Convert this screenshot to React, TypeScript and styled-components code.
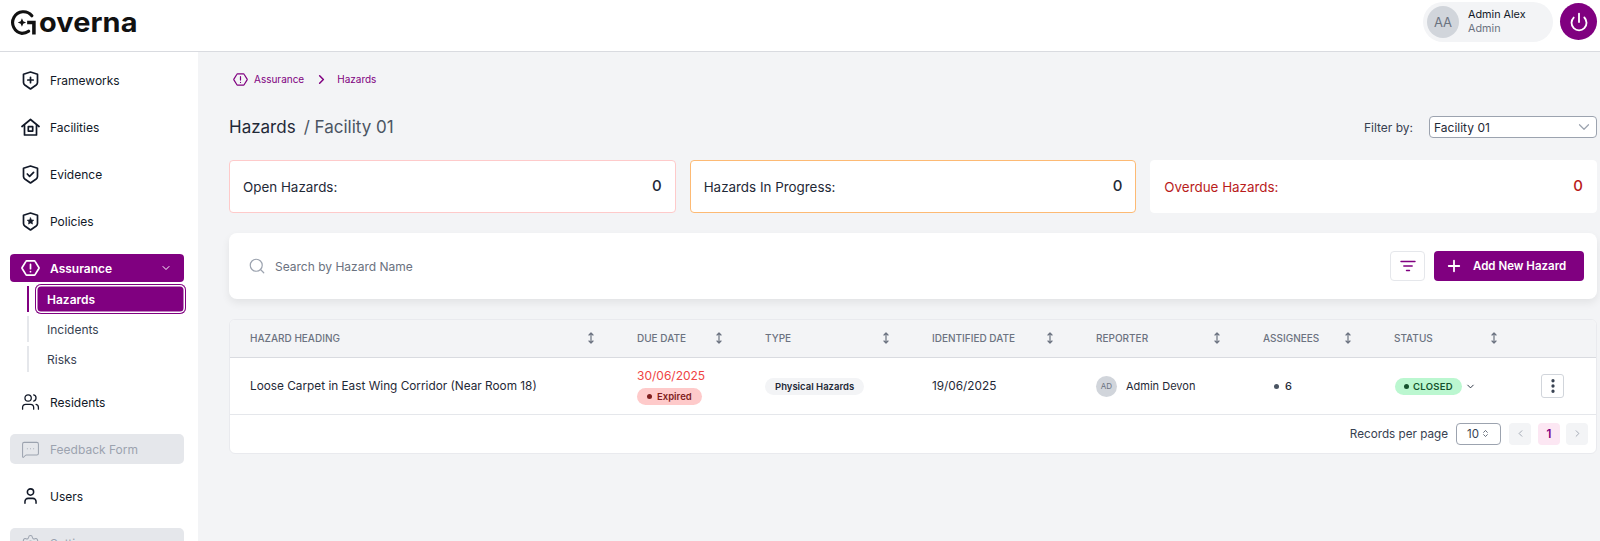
import React from 'react';
import styled, { createGlobalStyle } from 'styled-components';
import {
    ChevronDown,
    ChevronLeft,
    ChevronRight,
    ChevronsUpDown,
    EllipsisVertical,
    MessageSquareMore,
    Plus,
    Power,
    Search,
    Settings,
    User,
    Users,
} from 'lucide-react';

const PURPLE = '#800080';

const GlobalStyle = createGlobalStyle`
    html, body {
        margin: 0;
        padding: 0;
        height: 100%;
        overflow: hidden;
        background: #f3f4f6;
        font-family: Inter, "Liberation Sans", sans-serif;
        color: #111827;
    }
    * {
        box-sizing: border-box;
    }
`;

const Page = styled.div`
    display: flex;
    flex-direction: column;
    height: 541px;
    overflow: hidden;
`;

// 상단 헤더
const Header = styled.header`
    flex: none;
    display: flex;
    justify-content: space-between;
    align-items: flex-start;
    height: 52px;
    padding: 2px 3px 0 9px;
    background: #fff;
    border-bottom: 1px solid #d9dbe0;
`;
const Logo = styled.div`
    display: flex;
    align-items: center;
    height: 25px;
    margin-top: 8px;
`;
const LogoText = styled.span`
    margin-left: 1px;
    font-size: 27px;
    line-height: 24px;
    font-weight: 700;
    letter-spacing: 0.1px;
    color: #111;
    transform: scaleX(1.07);
    transform-origin: left center;
`;
const HeaderRight = styled.div`
    display: flex;
    align-items: flex-start;
    gap: 7px;
`;
const UserPill = styled.div`
    display: flex;
    align-items: center;
    gap: 9px;
    width: 130px;
    height: 40px;
    padding-left: 4px;
    border-radius: 20px;
    background: #f3f4f6;
`;
const Avatar = styled.div<{ $size: number; $font: number }>`
    flex: none;
    display: flex;
    align-items: center;
    justify-content: center;
    width: ${({ $size }) => $size}px;
    height: ${({ $size }) => $size}px;
    border-radius: 50%;
    background: #d1d5db;
    color: #6b7280;
    font-size: ${({ $font }) => $font}px;
`;
const UserText = styled.div`
    display: flex;
    flex-direction: column;
    gap: 2px;
    font-size: 10.8px;
    line-height: 12px;
`;
const UserName = styled.span`
    color: #111827;
    font-weight: 400;
`;
const UserRole = styled.span`
    color: #6b7280;
`;
const PowerButton = styled.button`
    display: flex;
    align-items: center;
    justify-content: center;
    width: 37px;
    height: 37px;
    margin-top: 1px;
    padding: 0;
    border: none;
    border-radius: 50%;
    background: ${PURPLE};
    color: #fff;
`;

const Body = styled.div`
    flex: 1;
    display: flex;
    min-height: 0;
`;

// 사이드바
const Sidebar = styled.nav`
    flex: none;
    width: 198px;
    padding: 13px 14px 0 10px;
    background: #fff;
`;
const NavItem = styled.div<{ $disabled?: boolean }>`
    display: flex;
    align-items: center;
    gap: 10px;
    height: 30px;
    margin-bottom: 17px;
    padding-left: 11px;
    border-radius: 5px;
    font-size: 12px;
    font-weight: 400;
    color: ${({ $disabled }) => ($disabled ? '#9ca3af' : '#111827')};
    background: ${({ $disabled }) => ($disabled ? '#e5e7eb' : 'transparent')};
`;
const NavIcon = styled.span`
    flex: none;
    display: flex;
    align-items: center;
    justify-content: center;
    width: 19px;
    height: 19px;
`;
const ActiveHead = styled.div`
    display: flex;
    align-items: center;
    gap: 10px;
    height: 28px;
    margin-top: 18px;
    padding: 0 12px 0 11px;
    border-radius: 4px;
    background: ${PURPLE};
    color: #fff;
    font-size: 12px;
    font-weight: 600;
`;
const HeadLabel = styled.span`
    flex: 1;
`;
const SubList = styled.div`
    display: flex;
    flex-direction: column;
    margin: 2px 0 13px;
`;
const SubRow = styled.div`
    display: flex;
    align-items: center;
    height: 30px;
    padding-left: 17px;
`;
const SubLine = styled.span<{ $active?: boolean }>`
    flex: none;
    width: 2px;
    height: 26px;
    margin-right: 6px;
    background: ${({ $active }) => ($active ? PURPLE : '#e5e7eb')};
`;
const SubLabel = styled.span<{ $active?: boolean }>`
    flex: 1;
    display: flex;
    align-items: center;
    height: 30px;
    margin-right: ${({ $active }) => ($active ? '-2px' : '0')};
    padding-left: 12px;
    border-radius: 6px;
    font-size: 12px;
    font-weight: ${({ $active }) => ($active ? 600 : 400)};
    color: ${({ $active }) => ($active ? '#fff' : '#374151')};
    background: ${({ $active }) => ($active ? PURPLE : 'transparent')};
    box-shadow: ${({ $active }) => ($active ? `inset 0 0 0 1px ${PURPLE}, inset 0 0 0 2.5px #fff` : 'none')};
`;

// 본문
const Main = styled.main`
    flex: 1;
    min-width: 0;
    padding: 17px 3px 0 31px;
`;
const Breadcrumb = styled.div`
    display: flex;
    align-items: center;
    height: 20px;
    padding-left: 4px;
    font-size: 10px;
    color: ${PURPLE};
`;
const CrumbText = styled.span`
    margin-left: 6px;
`;
const CrumbChevron = styled.span`
    display: flex;
    margin: 0 8px 0 10px;
`;
const TitleRow = styled.div`
    display: flex;
    align-items: center;
    justify-content: space-between;
    height: 22px;
    margin-top: 27px;
`;
const Title = styled.h1`
    margin: 0;
    font-size: 17px;
    font-weight: 400;
    color: #1f2937;
`;
const TitleSub = styled.span`
    margin-left: 8px;
    color: #4b5563;
`;
const FilterGroup = styled.div`
    display: flex;
    align-items: center;
    gap: 16px;
    font-size: 12px;
    color: #374151;
`;
const FilterSelect = styled.div`
    display: flex;
    align-items: center;
    justify-content: space-between;
    width: 168px;
    height: 22px;
    padding: 0 3px 0 4px;
    border: 1px solid #9ca3af;
    border-radius: 4px;
    background: #fff;
    font-size: 12px;
    color: #1f2937;
`;
const StatGrid = styled.div`
    display: grid;
    grid-template-columns: repeat(3, 1fr);
    gap: 14px;
    margin-top: 22px;
`;
const StatCard = styled.div<{ $border: string; $alert?: boolean }>`
    display: flex;
    align-items: center;
    justify-content: space-between;
    height: 53px;
    padding: 0 13px;
    border: 1px solid ${({ $border }) => $border};
    border-radius: 4px;
    background: #fff;
    font-size: 13.4px;
    color: ${({ $alert }) => ($alert ? '#b91c1c' : '#1f2937')};
`;
const StatValue = styled.span`
    margin-top: -2px;
    font-size: 15px;
    font-weight: 500;
`;
const SearchCard = styled.div`
    display: flex;
    align-items: center;
    height: 66px;
    margin-top: 20px;
    padding: 0 13px 0 19px;
    border-radius: 8px;
    background: #fff;
    box-shadow: 0 4px 8px rgba(0, 0, 0, 0.07);
`;
const SearchText = styled.span`
    flex: 1;
    margin-left: 9px;
    font-size: 12px;
    color: #6b7280;
`;
const FilterButton = styled.button`
    display: flex;
    align-items: center;
    justify-content: center;
    width: 35px;
    height: 30px;
    margin-right: 9px;
    padding: 0;
    border: 1px solid #e5e7eb;
    border-radius: 4px;
    background: #fff;
`;
const AddButton = styled.button`
    display: flex;
    align-items: center;
    gap: 10px;
    width: 150px;
    height: 30px;
    padding: 0 0 0 11px;
    border: none;
    border-radius: 4px;
    background: ${PURPLE};
    color: #fff;
    font-family: inherit;
    font-size: 11.5px;
    font-weight: 600;
`;

// 테이블
const Table = styled.div`
    height: 135px;
    margin-top: 20px;
    border: 1px solid #e9eaee;
    border-radius: 6px;
    overflow: hidden;
    background: #fff;
`;
const columns = '387px 128px 167px 164px 167px 131px 146px 1fr';
const TableHead = styled.div`
    display: grid;
    grid-template-columns: ${columns};
    height: 38px;
    background: #f3f4f6;
    border-bottom: 1px solid #d9dbe0;
`;
const HeadCell = styled.div`
    display: flex;
    align-items: center;
    justify-content: space-between;
    padding: 0 22px 2px 20px;
    font-size: 10px;
    font-weight: 500;
    color: #6b7280;
`;
const TableRow = styled.div`
    display: grid;
    grid-template-columns: ${columns};
    height: 57px;
    border-bottom: 1px solid #e5e7eb;
`;
const Cell = styled.div`
    display: flex;
    align-items: center;
    padding-left: 20px;
    font-size: 11.8px;
    color: #1f2937;
`;
const DueCell = styled(Cell)`
    flex-direction: column;
    align-items: flex-start;
    justify-content: center;
    gap: 5px;
    font-size: 12px;
`;
const DueDate = styled.span`
    color: #ef4444;
    line-height: 15px;
`;
const Badge = styled.span<{ $bg: string; $color: string }>`
    display: inline-flex;
    align-items: center;
    gap: 5px;
    height: 17px;
    padding: 0 10px;
    border-radius: 9px;
    background: ${({ $bg }) => $bg};
    color: ${({ $color }) => $color};
    font-size: 9.5px;
    font-weight: 600;
    white-space: nowrap;
`;
const StatusCell = styled(Cell)`
    padding-left: 21px;
`;
const StatusBadge = styled(Badge)`
    gap: 4px;
    padding: 0 9px;
    letter-spacing: 0.3px;
`;
const Dot = styled.span<{ $color: string }>`
    width: 5px;
    height: 5px;
    border-radius: 50%;
    background: ${({ $color }) => $color};
`;
const ReporterName = styled.span`
    margin-left: 9px;
    font-size: 11px;
`;
const AssigneeCell = styled(Cell)`
    gap: 6px;
    padding-left: 31px;
    font-size: 11px;
    font-weight: 500;
`;
const ActionCell = styled.div`
    display: flex;
    align-items: center;
    padding-left: 21px;
`;
const KebabButton = styled.button`
    display: flex;
    align-items: center;
    justify-content: center;
    width: 23px;
    height: 24px;
    padding: 0;
    border: 1px solid #d1d5db;
    border-radius: 3px;
    background: #fff;
    color: #374151;
`;
const TableFooter = styled.div`
    display: flex;
    align-items: center;
    justify-content: flex-end;
    height: 37px;
    padding: 0 8px 0 0;
    font-size: 11.7px;
    color: #374151;
`;
const PerPage = styled.div`
    display: flex;
    align-items: center;
    justify-content: center;
    gap: 2px;
    width: 45px;
    height: 22px;
    margin: 0 8px;
    border: 1px solid #9ca3af;
    border-radius: 4px;
    font-size: 11.5px;
`;
const PageButton = styled.div<{ $current?: boolean }>`
    display: flex;
    align-items: center;
    justify-content: center;
    width: 22px;
    height: 22px;
    margin-left: ${({ $current }) => ($current ? '7px' : '0')};
    margin-right: ${({ $current }) => ($current ? '6px' : '0')};
    border-radius: 4px;
    background: ${({ $current }) => ($current ? '#fce7f3' : '#f3f4f6')};
    color: ${({ $current }) => ($current ? PURPLE : '#9ca3af')};
    font-size: 11.5px;
    font-weight: 600;
`;

const svgProps = {
    fill: 'none',
    stroke: 'currentColor',
    strokeLinecap: 'round' as const,
    strokeLinejoin: 'round' as const,
};

const LogoMark = () => (
    <svg width="29" height="25" viewBox="0 0 27 24" fill="none">
        <path d="M21.5 5.5A10.4 10.4 0 1 0 12 22.4c2.4 0 4.6-.7 6.4-2" stroke="#111" strokeWidth="3" strokeLinecap="round" />
        <path d="M17 12h6.5v11.5" stroke="#111" strokeWidth="3.4" />
        <path d="M12 8l1.2 2.8L16 12l-2.8 1.2L12 16l-1.2-2.8L8 12l2.8-1.2z" fill="#111" />
    </svg>
);

const ShieldIcon = ({ children }: { children: React.ReactNode }) => (
    <svg width="17" height="19" viewBox="0 0 17 19" {...svgProps} strokeWidth="1.7">
        <path d="M1.5 3.2 8.5 1l7 2.2v8.4c0 1-.5 1.8-1.3 2.4L8.5 18l-5.7-4c-.8-.6-1.3-1.4-1.3-2.4z" />
        {children}
    </svg>
);

const HouseIcon = () => (
    <svg width="19" height="19" viewBox="0 0 19 19" {...svgProps} strokeWidth="1.7">
        <path d="M1 8.5 9.5 1.5 18 8.5" />
        <path d="M3.5 7.5V17h12V7.5" />
        <rect x="7.3" y="8.7" width="4.4" height="4.4" />
    </svg>
);

const HexAlert = ({ size, stroke }: { size: number; stroke: number }) => (
    <svg width={size} height={size} viewBox="0 0 20 20" {...svgProps} strokeWidth={stroke}>
        <path d="M6 2.5h8a1 1 0 0 1 .8.5l4 6.5a1 1 0 0 1 0 1l-4 6.5a1 1 0 0 1-.8.5H6a1 1 0 0 1-.8-.5l-4-6.5a1 1 0 0 1 0-1l4-6.5a1 1 0 0 1 .8-.5z" />
        <path d="M10 6.2v4.6M10 13.8v.1" />
    </svg>
);

const SortIcon = () => (
    <svg width="8" height="12" viewBox="0 0 8 12" {...svgProps} stroke="#6b7280" strokeWidth="1.2">
        <path d="M4 1v10M2 3l2-2 2 2M2 9l2 2 2-2" />
    </svg>
);

const FilterLines = () => (
    <svg width="16" height="12" viewBox="0 0 16 12" {...svgProps} stroke={PURPLE} strokeWidth="1.4">
        <path d="M1 1.5h14M3.8 6h8.4M6.5 10.5h3" />
    </svg>
);

const headers = ['HAZARD HEADING', 'DUE DATE', 'TYPE', 'IDENTIFIED DATE', 'REPORTER', 'ASSIGNEES', 'STATUS'];

const App: React.FC = () => {
    return (
        <Page>
            <GlobalStyle />
            <Header>
                <Logo>
                    <LogoMark />
                    <LogoText>overna</LogoText>
                </Logo>
                <HeaderRight>
                    <UserPill>
                        <Avatar $size={32} $font={13}>AA</Avatar>
                        <UserText>
                            <UserName>Admin Alex</UserName>
                            <UserRole>Admin</UserRole>
                        </UserText>
                    </UserPill>
                    <PowerButton>
                        <Power size={20} strokeWidth={2.2} />
                    </PowerButton>
                </HeaderRight>
            </Header>
            <Body>
                <Sidebar>
                    <NavItem>
                        <NavIcon>
                            <ShieldIcon><path d="M8.5 6.3v5.4M5.8 9h5.4" /></ShieldIcon>
                        </NavIcon>
                        Frameworks
                    </NavItem>
                    <NavItem>
                        <NavIcon><HouseIcon /></NavIcon>
                        Facilities
                    </NavItem>
                    <NavItem>
                        <NavIcon>
                            <ShieldIcon><path d="m5.3 9 2.3 2.3 4-4" /></ShieldIcon>
                        </NavIcon>
                        Evidence
                    </NavItem>
                    <NavItem>
                        <NavIcon>
                            <ShieldIcon>
                                <path d="m8.5 5.8 1 2.1 2.3.3-1.7 1.6.4 2.3-2-1.1-2 1.1.4-2.3-1.7-1.6 2.3-.3z" fill="currentColor" strokeWidth="0.6" />
                            </ShieldIcon>
                        </NavIcon>
                        Policies
                    </NavItem>
                    <ActiveHead>
                        <NavIcon><HexAlert size={20} stroke={1.8} /></NavIcon>
                        <HeadLabel>Assurance</HeadLabel>
                        <ChevronDown size={12} />
                    </ActiveHead>
                    <SubList>
                        <SubRow>
                            <SubLine $active />
                            <SubLabel $active>Hazards</SubLabel>
                        </SubRow>
                        <SubRow>
                            <SubLine />
                            <SubLabel>Incidents</SubLabel>
                        </SubRow>
                        <SubRow>
                            <SubLine />
                            <SubLabel>Risks</SubLabel>
                        </SubRow>
                    </SubList>
                    <NavItem>
                        <NavIcon><Users size={22} strokeWidth={1.6} /></NavIcon>
                        Residents
                    </NavItem>
                    <NavItem $disabled>
                        <NavIcon><MessageSquareMore size={19} strokeWidth={1.3} /></NavIcon>
                        Feedback Form
                    </NavItem>
                    <NavItem>
                        <NavIcon><User size={22} strokeWidth={1.9} /></NavIcon>
                        Users
                    </NavItem>
                    <NavItem $disabled>
                        <NavIcon><Settings size={19} strokeWidth={1.3} /></NavIcon>
                        Settings
                    </NavItem>
                </Sidebar>
                <Main>
                    <Breadcrumb>
                        <HexAlert size={15} stroke={1.6} />
                        <CrumbText>Assurance</CrumbText>
                        <CrumbChevron><ChevronRight size={15} strokeWidth={2.4} /></CrumbChevron>
                        Hazards
                    </Breadcrumb>
                    <TitleRow>
                        <Title>
                            Hazards
                            <TitleSub>/ Facility 01</TitleSub>
                        </Title>
                        <FilterGroup>
                            Filter by:
                            <FilterSelect>
                                Facility 01
                                <ChevronDown size={18} color="#9ca3af" strokeWidth={1.6} />
                            </FilterSelect>
                        </FilterGroup>
                    </TitleRow>
                    <StatGrid>
                        <StatCard $border="#fecaca">
                            Open Hazards:
                            <StatValue>0</StatValue>
                        </StatCard>
                        <StatCard $border="#fdba74">
                            Hazards In Progress:
                            <StatValue>0</StatValue>
                        </StatCard>
                        <StatCard $border="#fff" $alert>
                            Overdue Hazards:
                            <StatValue>0</StatValue>
                        </StatCard>
                    </StatGrid>
                    <SearchCard>
                        <Search size={18} color="#9ca3af" strokeWidth={1.6} />
                        <SearchText>Search by Hazard Name</SearchText>
                        <FilterButton><FilterLines /></FilterButton>
                        <AddButton>
                            <Plus size={18} strokeWidth={2.4} />
                            Add New Hazard
                        </AddButton>
                    </SearchCard>
                    <Table>
                        <TableHead>
                            {headers.map((label) => (
                                <HeadCell key={label}>
                                    {label}
                                    <SortIcon />
                                </HeadCell>
                            ))}
                            <HeadCell />
                        </TableHead>
                        <TableRow>
                            <Cell>Loose Carpet in East Wing Corridor (Near Room 18)</Cell>
                            <DueCell>
                                <DueDate>30/06/2025</DueDate>
                                <Badge $bg="#fecaca" $color="#7f1d1d">
                                    <Dot $color="#7f1d1d" />
                                    Expired
                                </Badge>
                            </DueCell>
                            <Cell>
                                <Badge $bg="#f3f4f6" $color="#1f2937">Physical Hazards</Badge>
                            </Cell>
                            <Cell>19/06/2025</Cell>
                            <Cell>
                                <Avatar $size={21} $font={8}>AD</Avatar>
                                <ReporterName>Admin Devon</ReporterName>
                            </Cell>
                            <AssigneeCell>
                                <Dot $color="#4b5563" />
                                6
                            </AssigneeCell>
                            <StatusCell>
                                <StatusBadge $bg="#bbf7d0" $color="#14532d">
                                    <Dot $color="#14532d" />
                                    CLOSED
                                </StatusBadge>
                                <ChevronDown size={11} style={{ marginLeft: 3 }} />
                            </StatusCell>
                            <ActionCell>
                                <KebabButton><EllipsisVertical size={18} strokeWidth={2.4} /></KebabButton>
                            </ActionCell>
                        </TableRow>
                        <TableFooter>
                            Records per page
                            <PerPage>
                                10
                                <ChevronsUpDown size={9} />
                            </PerPage>
                            <PageButton><ChevronLeft size={11} /></PageButton>
                            <PageButton $current>1</PageButton>
                            <PageButton><ChevronRight size={11} /></PageButton>
                        </TableFooter>
                    </Table>
                </Main>
            </Body>
        </Page>
    );
};

export default App;
